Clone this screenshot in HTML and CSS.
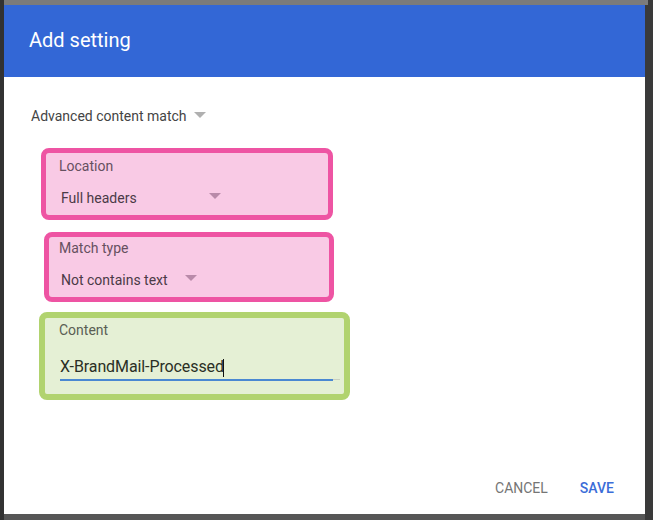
FILE: index.html
```html
<!DOCTYPE html>
<html lang="en">
<head>
<meta charset="utf-8">
<title>Add setting</title>
<link rel="stylesheet" href="styles.css">
</head>
<body>
<div class="screen">
  <div class="side-left"></div>
  <div class="center">
    <div class="top-gap"></div>
    <div class="dialog">
      <header class="dialog-header">
        <h1 class="dialog-title">Add setting</h1>
      </header>
      <div class="dialog-body">
        <div class="dropdown-row">
          <span class="dropdown-text">Advanced content match</span>
          <span class="caret caret-gray"></span>
        </div>

        <div class="field field-location hl-pink">
          <div class="field-label">Location</div>
          <div class="field-select">
            <span class="select-text">Full headers</span>
            <span class="caret caret-pink caret-location"></span>
          </div>
        </div>

        <div class="field field-match hl-pink">
          <div class="field-label">Match type</div>
          <div class="field-select">
            <span class="select-text">Not contains text</span>
            <span class="caret caret-pink caret-match"></span>
          </div>
        </div>

        <div class="field field-content hl-green">
          <div class="field-label">Content</div>
          <div class="input-wrap">
            <div class="input-text">X-BrandMail-Processed<span class="cursor"></span></div>
            <div class="input-line"><div class="input-line-active"></div></div>
          </div>
        </div>
      </div>
      <footer class="dialog-footer">
        <button class="btn btn-cancel" type="button">CANCEL</button>
        <button class="btn btn-save" type="button">SAVE</button>
      </footer>
    </div>
    <div class="bottom-gap"></div>
  </div>
  <div class="side-right"></div>
</div>
</body>
</html>
```

FILE: styles.css
```css
html, body {
  margin: 0;
  padding: 0;
}

body {
  width: 653px;
  height: 520px;
  overflow: hidden;
  background: #363636;
  font-family: Roboto, "Noto Sans", Arial, sans-serif;
}

.screen {
  display: flex;
  height: 520px;
}

.side-left {
  width: 4px;
  background: #323232;
}

.side-right {
  flex: 1;
  background: linear-gradient(to right, #7d7d7d 0, #7d7d7d 3px, #3a3a3a 3px);
  background-size: 100% 5px;
  background-repeat: no-repeat;
  background-color: #3a3a3a;
}

.center {
  width: 641px;
  display: flex;
  flex-direction: column;
}

.top-gap {
  height: 5px;
  background: #7b7b7b;
}

.bottom-gap {
  flex: 1;
  background: #565656;
}

.dialog {
  height: 509px;
  background: #ffffff;
  display: flex;
  flex-direction: column;
}

.dialog-header {
  height: 72px;
  background: #3367d6;
  display: flex;
  align-items: center;
  padding-left: 25px;
}

.dialog-title {
  margin: 0;
  font-size: 20px;
  font-weight: 400;
  color: #ffffff;
  line-height: 24px;
  padding-bottom: 2px;
}

.dialog-body {
  padding: 29px 0 0 27px;
  display: flex;
  flex-direction: column;
  align-items: flex-start;
}

.dropdown-row {
  display: flex;
  align-items: center;
  height: 20px;
}

.dropdown-text {
  font-size: 14px;
  line-height: 20px;
  color: #444444;
}

.caret {
  width: 0;
  height: 0;
  border-left: 6px solid transparent;
  border-right: 6px solid transparent;
}

.caret-gray {
  margin-left: 7px;
  margin-top: -3px;
  border-top: 6px solid #b0b0b0;
}

.caret-pink {
  border-top: 6px solid #b98aa9;
}

.field {
  border-radius: 8px;
  box-sizing: border-box;
}

.hl-pink {
  background: #f9cae5;
  border: 5px solid #ee54a3;
}

.hl-green {
  background: #e5f0d5;
  border: 6px solid #b1d36f;
}

.field-label {
  font-size: 14px;
  line-height: 16px;
  color: #66505f;
}

.field-select {
  display: flex;
  align-items: center;
  height: 20px;
  padding-left: 2px;
}

.select-text {
  font-size: 14px;
  line-height: 20px;
  color: #4b3a47;
}

.field-location {
  width: 292px;
  height: 72px;
  margin-top: 22px;
  margin-left: 10px;
  padding: 5px 0 0 13px;
}

.field-location .field-select {
  margin-top: 14px;
}

.caret-location {
  margin-left: 72px;
  margin-top: -5px;
}

.field-match {
  width: 290px;
  height: 70px;
  margin-top: 12px;
  margin-left: 13px;
  padding: 3px 0 0 10px;
}

.field-match .field-select {
  margin-top: 14px;
}

.caret-match {
  margin-left: 17px;
  margin-top: -5px;
}

.field-content {
  width: 311px;
  height: 88px;
  margin-top: 10px;
  margin-left: 8px;
  padding: 4px 0 0 14px;
}

.field-content .field-label {
  color: #5a5e54;
}

.input-wrap {
  margin-top: 19px;
  padding-left: 1px;
  width: 280px;
}

.input-text {
  font-size: 16px;
  line-height: 20px;
  color: #2a2f25;
  display: flex;
  align-items: center;
  margin-top: 2px;
  letter-spacing: -0.1px;
}

.cursor {
  display: inline-block;
  width: 1px;
  height: 18px;
  margin-left: -1px;
  margin-top: 2px;
  background: #111111;
}

.input-line {
  margin-top: 2px;
  height: 1px;
  background: #c9cfc0;
}

.input-line-active {
  width: 273px;
  height: 2px;
  background: #4a88d2;
}

.dialog-footer {
  margin-top: auto;
  display: flex;
  justify-content: flex-end;
  align-items: center;
  gap: 32px;
  padding: 0 31px 16px 0;
}

.btn {
  border: none;
  background: none;
  padding: 0;
  font-family: Roboto, "Noto Sans", Arial, sans-serif;
  font-size: 14px;
  font-weight: 500;
  line-height: 20px;
  cursor: pointer;
}

.btn-cancel {
  color: #757575;
  font-weight: 400;
}

.btn-save {
  color: #3b6dd8;
}
```
